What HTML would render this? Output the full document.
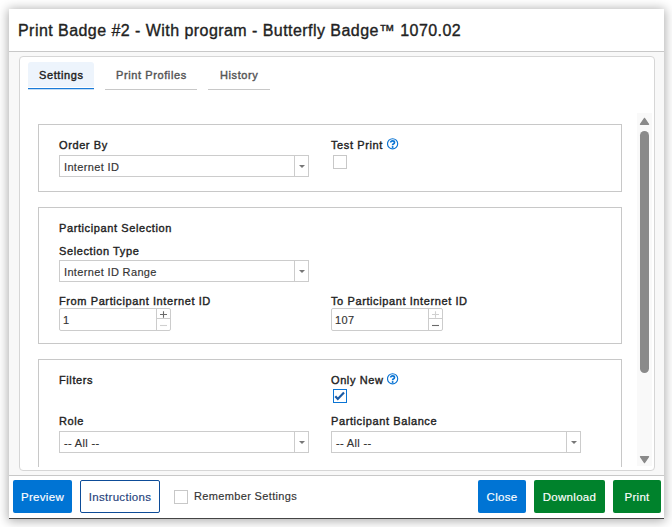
<!DOCTYPE html>
<html><head><meta charset="utf-8">
<style>
*{box-sizing:border-box;margin:0;padding:0}
html,body{width:672px;height:527px;overflow:hidden;background:#fff;font-family:"Liberation Sans",sans-serif;color:#222}
.a{position:absolute;white-space:nowrap}
#dlg{position:absolute;left:9px;top:9px;width:655px;height:510px;background:#fff;box-shadow:0 1px 10px 1px rgba(0,0,0,0.33);border-bottom:1px solid #444}
#hdr{position:absolute;left:0;top:0;width:655px;height:43px;border-bottom:1px solid #c8c8c8;background:#fff}
#title{position:absolute;left:9px;top:13px;font-size:16px;line-height:18px;letter-spacing:0.45px;-webkit-text-stroke:0.35px #222;white-space:nowrap;color:#222}
#body{position:absolute;left:0;top:43px;width:655px;height:424px;background:#f8f8f8;border-bottom:1px solid #c8c8c8}
#panel{position:absolute;left:10px;top:4px;width:636px;height:415px;background:#fff;border:1px solid #d6d6d6;border-radius:4px}
.tab{position:absolute;top:62px;height:27px;font-size:11px;white-space:nowrap}
.tab span{position:absolute;top:6px;line-height:14px;letter-spacing:0.6px;-webkit-text-stroke:0.4px currentColor}
.sec{position:absolute;left:38px;width:584px;border:1px solid #c8c8c8;background:#fff}
.lbl{position:absolute;font-size:11px;line-height:14px;letter-spacing:0.6px;-webkit-text-stroke:0.38px #222;white-space:nowrap;color:#222}
.sel{position:absolute;height:22px;border:1px solid #ccc;background:#fff}
.sel span{position:absolute;left:4px;top:4px;font-size:11px;line-height:14px;letter-spacing:0.35px;-webkit-text-stroke:0.15px #333;color:#333;white-space:nowrap}
.sel i{position:absolute;right:0;top:0;width:14px;height:20px;border-left:1px solid #ccc}
.sel i:after{content:"";position:absolute;left:4px;top:9px;border-left:3px solid transparent;border-right:3px solid transparent;border-top:3px solid #777}
.cb{position:absolute;width:14px;height:14px;border:1px solid #c8c8c8;background:#fff}
.btn{position:absolute;top:480px;height:33px;border-radius:2px;font-size:11.5px;letter-spacing:0.3px;-webkit-text-stroke:0.15px currentColor;color:#fff;text-align:center;line-height:35px;white-space:nowrap}
.num{position:absolute;top:308px;height:23px;border:1px solid #ccc;border-radius:2px;background:#fff}
.num span{position:absolute;left:3px;top:4px;font-size:11px;line-height:14px;letter-spacing:0.35px;-webkit-text-stroke:0.15px #333;color:#333}
.spin{position:absolute;right:0;top:0;width:14px;height:21px;border-left:1px solid #ccc}
.spin b{position:absolute;left:0;width:13px;height:10px;font-weight:normal}
.help{position:absolute;width:12px;height:12px}
</style></head><body>
<div id="dlg">
  <div id="hdr"><div id="title">Print Badge #2 - With program - Butterfly Badge™ 1070.02</div></div>
  <div id="body"><div id="panel"></div></div>
</div>

<!-- tabs -->
<div class="tab" style="left:28px;width:66px;height:25px;background:#edf4fc;border-radius:3px 3px 0 0;"><span style="left:11px;color:#222">Settings</span></div>
<div class="a" style="left:28px;top:88px;width:66px;height:1px;background:#1a7bd8;box-shadow:0 0.6px 0.6px rgba(26,123,216,0.5)"></div>
<div class="tab" style="left:105px;width:92px;height:28px;border-bottom:1px solid #c8c8c8;"><span style="left:11px;color:#555">Print Profiles</span></div>
<div class="tab" style="left:208px;width:62px;height:28px;border-bottom:1px solid #c8c8c8;"><span style="left:12px;color:#555">History</span></div>

<!-- scrollbar -->
<div class="a" style="left:637px;top:113px;width:15px;height:353px;background:#f9f9f9"></div>
<svg class="a" style="left:637px;top:113px" width="15" height="353" viewBox="0 0 15 353">
  <path d="M7.5 5.3 L11.6 11.3 L3.4 11.3 Z" fill="#8a8a8a" stroke="#8a8a8a" stroke-width="1.2" stroke-linejoin="round"/>
  <rect x="3" y="18" width="9" height="242" rx="4.5" fill="#8a8a8a"/>
  <path d="M3.4 343.7 L11.6 343.7 L7.5 349.7 Z" fill="#8a8a8a" stroke="#8a8a8a" stroke-width="1.2" stroke-linejoin="round"/>
</svg>

<!-- section 1 -->
<div class="sec" style="top:124px;height:68px"></div>
<div class="lbl" style="left:59px;top:138px">Order By</div>
<div class="sel" style="left:59px;top:155px;width:250px"><span>Internet ID</span><i></i></div>
<div class="lbl" style="left:331px;top:138px">Test Print</div>
<svg class="help" style="left:387px;top:138px" width="12" height="12" viewBox="0 0 12 12"><circle cx="5.6" cy="5.8" r="5.1" fill="none" stroke="#0a74d4" stroke-width="1.15"/><path d="M3.7 4.6C3.7 3.5 4.5 2.8 5.6 2.8C6.7 2.8 7.5 3.5 7.5 4.4C7.5 5.3 6.9 5.7 6.3 6.1C5.8 6.4 5.6 6.7 5.6 7.3" fill="none" stroke="#0a74d4" stroke-width="1.7"/><circle cx="5.6" cy="8.95" r="1" fill="#0a74d4"/></svg>
<div class="cb" style="left:333px;top:155px"></div>

<!-- section 2 -->
<div class="sec" style="top:207px;height:137px"></div>
<div class="lbl" style="left:59px;top:221px">Participant Selection</div>
<div class="lbl" style="left:59px;top:244px">Selection Type</div>
<div class="sel" style="left:59px;top:260px;width:250px"><span>Internet ID Range</span><i></i></div>
<div class="lbl" style="left:59px;top:294px">From Participant Internet ID</div>
<div class="num" style="left:59px;width:112px"><span>1</span><div class="spin">
  <svg class="a" style="left:0;top:0" width="13" height="20" viewBox="0 0 13 20"><line x1="0" y1="9.5" x2="13" y2="9.5" stroke="#ccc" stroke-width="1"/><path d="M3 5.5H10M6.5 2.3V8.7" stroke="#6a6a6a" stroke-width="1.1"/><path d="M3 16.5H10" stroke="#d0d0d0" stroke-width="1.1"/></svg></div></div>
<div class="lbl" style="left:331px;top:294px">To Participant Internet ID</div>
<div class="num" style="left:331px;width:112px"><span>107</span><div class="spin">
  <svg class="a" style="left:0;top:0" width="13" height="20" viewBox="0 0 13 20"><line x1="0" y1="9.5" x2="13" y2="9.5" stroke="#ccc" stroke-width="1"/><path d="M3 5.5H10M6.5 2.3V8.7" stroke="#d0d0d0" stroke-width="1.1"/><path d="M3 16.5H10" stroke="#6a6a6a" stroke-width="1.1"/></svg></div></div>

<!-- section 3 -->
<div class="sec" style="top:359px;height:108px;border-bottom:none"></div>
<div class="lbl" style="left:59px;top:373px">Filters</div>
<div class="lbl" style="left:331px;top:373px">Only New</div>
<svg class="help" style="left:387px;top:373px" width="12" height="12" viewBox="0 0 12 12"><circle cx="5.6" cy="5.8" r="5.1" fill="none" stroke="#0a74d4" stroke-width="1.15"/><path d="M3.7 4.6C3.7 3.5 4.5 2.8 5.6 2.8C6.7 2.8 7.5 3.5 7.5 4.4C7.5 5.3 6.9 5.7 6.3 6.1C5.8 6.4 5.6 6.7 5.6 7.3" fill="none" stroke="#0a74d4" stroke-width="1.7"/><circle cx="5.6" cy="8.95" r="1" fill="#0a74d4"/></svg>
<div class="cb" style="left:333px;top:389px;border-color:#0a74d4"></div>
<svg class="a" style="left:333px;top:389px" width="14" height="14" viewBox="0 0 14 14"><path d="M2.3 7.3 L4.8 10 L11 3.6" fill="none" stroke="#1a5ba6" stroke-width="2.2"/></svg>
<div class="lbl" style="left:59px;top:414px">Role</div>
<div class="sel" style="left:59px;top:431px;width:250px"><span>-- All --</span><i></i></div>
<div class="lbl" style="left:331px;top:414px">Participant Balance</div>
<div class="sel" style="left:331px;top:431px;width:250px"><span>-- All --</span><i></i></div>

<!-- footer -->
<div class="btn" style="left:13px;width:59px;background:#0074d4">Preview</div>
<div class="btn" style="left:80px;width:80px;background:#fff;border:1px solid #0d4c98;color:#1f3f7c;line-height:33px">Instructions</div>
<div class="cb" style="left:174px;top:490px"></div>
<div class="a" style="left:194px;top:489px;font-size:11px;line-height:14px;letter-spacing:0.35px;-webkit-text-stroke:0.15px #333;color:#333">Remember Settings</div>
<div class="btn" style="left:478px;width:48px;background:#0074d4">Close</div>
<div class="btn" style="left:534px;width:71px;background:#00822c">Download</div>
<div class="btn" style="left:613px;width:48px;background:#00822c">Print</div>
</body></html>
